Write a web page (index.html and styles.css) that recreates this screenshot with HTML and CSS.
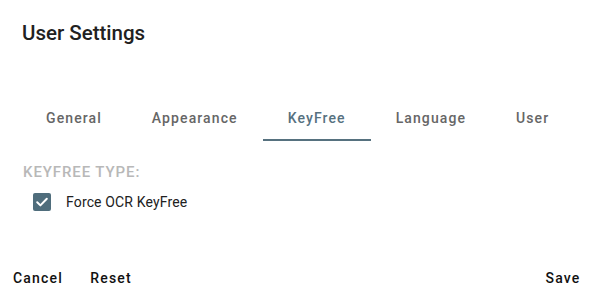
FILE: index.html
```html
<!DOCTYPE html>
<html>

<head>
    <meta charset="UTF-8">
    <meta name="viewport" content="width=device-width, initial-scale=1">
    <title>User Settings</title>
    <link rel="stylesheet" href="styles.css">
</head>

<body>
<div class="dialog">
    <h2 class="titel">User Settings</h2>

    <nav class="faner">
        <button class="fane">General</button>
        <button class="fane">Appearance</button>
        <button class="fane valgt">KeyFree</button>
        <button class="fane">Language</button>
        <button class="fane">User</button>
    </nav>

    <section class="indhold">
        <p class="overskrift">KEYFREE TYPE:</p>
        <label class="valg">
            <span class="boks">
                <svg width="18" height="18" viewBox="0 0 18 18">
                    <path d="M4.2 9.3l3.2 3.1 6.4-6.6" fill="none" stroke="#fff" stroke-width="2" stroke-linecap="round" stroke-linejoin="round"/>
                </svg>
            </span>
            Force OCR KeyFree
        </label>
    </section>

    <footer class="knapper">
        <button class="knap">Cancel</button>
        <button class="knap">Reset</button>
        <span class="fyld"></span>
        <button class="knap">Save</button>
    </footer>
</div>
</body>

</html>
```

FILE: styles.css
```css
body {
    margin: 0;
    background-color: white;
    font-family: Roboto, "Liberation Sans", sans-serif;
}

.dialog {
    width: 601px;
    height: 303px;
    display: flex;
    flex-direction: column;
}

.titel {
    margin: 0;
    padding: 17px 22px 0;
    font-size: 20.5px;
    font-weight: 500;
    line-height: 32px;
    color: #212121;
}

.faner {
    display: flex;
    margin-top: 44px;
    padding-left: 21px;
}

.fane {
    background: none;
    border: none;
    border-bottom: 2px solid transparent;
    height: 48px;
    padding: 4px 25px 0;
    font-family: inherit;
    font-size: 14px;
    font-weight: 500;
    letter-spacing: 1.1px;
    color: #666;
}

.valgt {
    color: #56717f;
    border-bottom-color: #56717f;
}

.indhold {
    padding: 0 23px;
}

.overskrift {
    margin: 21px 0 0;
    font-size: 15px;
    font-weight: 500;
    letter-spacing: 0.9px;
    line-height: 20px;
    color: #b8b8b8;
}

.valg {
    display: flex;
    align-items: center;
    gap: 15px;
    margin-top: 11px;
    padding-left: 10px;
    font-size: 14px;
    letter-spacing: 0.15px;
    color: #212121;
}

.boks {
    width: 18px;
    height: 18px;
    border-radius: 2px;
    background-color: #4f6d7c;
    display: flex;
}

.knapper {
    display: flex;
    margin-top: auto;
    padding: 0 6px 7px 5px;
    gap: 8px;
}

.fyld {
    flex: 1;
}

.knap {
    background: none;
    border: none;
    min-width: 64px;
    height: 36px;
    padding: 6px 8px;
    font-family: inherit;
    font-size: 14px;
    font-weight: 500;
    letter-spacing: 1.2px;
    color: #111;
}
```
